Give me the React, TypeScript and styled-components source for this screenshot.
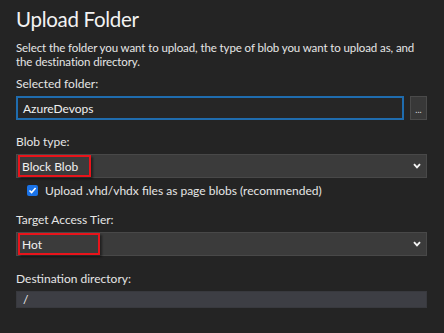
import styled, { createGlobalStyle } from 'styled-components';

const GlobalStyle = createGlobalStyle`
  html, body {
    margin: 0;
    padding: 0;
    background: #242424;
  }
  body {
    font-family: Lato, 'Noto Sans', sans-serif;
    color: #e4e4e4;
  }
`;

const Page = styled.div`
  width: 444px;
  height: 333px;
  box-sizing: border-box;
  padding: 4px 17px 0 16px;
  background: #242424;
  overflow: hidden;
  display: flex;
  flex-direction: column;
`;

const Title = styled.h1`
  margin: 0;
  font-size: 20.5px;
  font-weight: 400;
  letter-spacing: -0.3px;
  line-height: 30px;
  color: #f2f2f2;
`;

const Description = styled.p`
  margin: 7px 0 0;
  font-size: 11.5px;
  letter-spacing: -0.1px;
  line-height: 14px;
  color: #e6e6e6;
  white-space: nowrap;
`;

const Field = styled.div<{ $gap?: number }>`
  display: flex;
  flex-direction: column;
  margin-top: ${({ $gap }) => $gap ?? 0}px;
`;

const Label = styled.label`
  font-size: 12px;
  line-height: 14px;
  color: #e6e6e6;
  margin-bottom: 5px;
`;

const InputRow = styled.div`
  display: flex;
  gap: 6px;
`;

const TextBox = styled.div<{ $focused?: boolean }>`
  flex: 1;
  height: 24px;
  box-sizing: border-box;
  display: flex;
  align-items: center;
  padding: 0 6px;
  font-size: 12px;
  color: #f0f0f0;
  background: ${({ $focused }) => ($focused ? '#262626' : '#3d3e44')};
  border: 1px solid ${({ $focused }) => ($focused ? '#1f6cae' : '#38393e')};
  ${({ $focused }) => $focused && 'box-shadow: inset 0 0 0 1px #1f6cae;'}
`;

const BrowseButton = styled.button`
  width: 17px;
  height: 24px;
  padding: 0;
  background: #383838;
  border: 1px solid #4a4a4a;
  color: #d8d8d8;
  font-size: 9px;
  line-height: 1;
  display: flex;
  align-items: flex-end;
  justify-content: center;
  padding-bottom: 5px;
  box-sizing: border-box;
  font-family: inherit;
`;

const Select = styled.div`
  height: 24px;
  box-sizing: border-box;
  display: flex;
  align-items: center;
  justify-content: space-between;
  padding: 0 5px 0 1px;
  background: #3b3b3b;
  border: 1px solid #484848;
  font-size: 12px;
  color: #f0f0f0;
`;

const Highlight = styled.span<{ $width: number }>`
  width: ${({ $width }) => $width}px;
  height: 22px;
  box-sizing: border-box;
  display: flex;
  align-items: center;
  padding-left: 2px;
  border: 2px solid #e8141b;
  box-shadow: 2px 2px 2px rgba(0, 0, 0, 0.45);
`;

const Chevron = styled.svg`
  width: 8px;
  height: 6px;
`;

const CheckRow = styled.div`
  display: flex;
  align-items: center;
  gap: 7px;
  margin: 5px 0 0 11px;
  font-size: 12px;
  color: #e6e6e6;
`;

const CheckBox = styled.span`
  width: 11px;
  height: 11px;
  border-radius: 2px;
  background: #1a73e8;
  display: flex;
  align-items: center;
  justify-content: center;
`;

function Arrow() {
  return (
    <Chevron viewBox="0 0 8 6">
      <path d="M1 1.2 L4 4.3 L7 1.2" stroke="#f4f4f4" strokeWidth="1.9" fill="none" />
    </Chevron>
  );
}

export default function App() {
  return (
    <>
      <GlobalStyle />
      <Page>
        <Title>Upload Folder</Title>
        <Description>
          Select the folder you want to upload, the type of blob you want to upload as, and
          <br />
          the destination directory.
        </Description>

        <Field $gap={8}>
          <Label>Selected folder:</Label>
          <InputRow>
            <TextBox $focused>AzureDevops</TextBox>
            <BrowseButton type="button">...</BrowseButton>
          </InputRow>
        </Field>

        <Field $gap={15}>
          <Label>Blob type:</Label>
          <Select>
            <Highlight $width={73}>Block Blob</Highlight>
            <Arrow />
          </Select>
        </Field>

        <CheckRow>
          <CheckBox>
            <svg width="9" height="9" viewBox="0 0 9 9">
              <path d="M1.5 4.5 L3.6 6.6 L7.6 2" stroke="#fff" strokeWidth="1.6" fill="none" />
            </svg>
          </CheckBox>
          Upload .vhd/vhdx files as page blobs (recommended)
        </CheckRow>

        <Field $gap={15}>
          <Label>Target Access Tier:</Label>
          <Select>
            <Highlight $width={82}>Hot</Highlight>
            <Arrow />
          </Select>
        </Field>

        <Field $gap={16}>
          <Label>Destination directory:</Label>
          <TextBox>/</TextBox>
        </Field>
      </Page>
    </>
  );
}
